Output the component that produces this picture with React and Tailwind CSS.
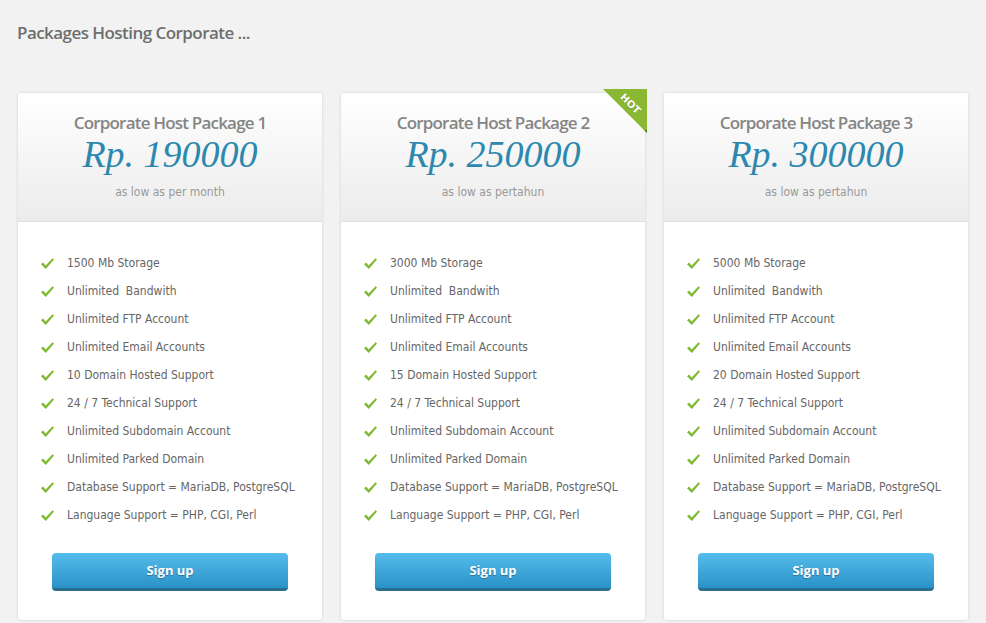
import React from "react";

const packages = [
  {
    name: "Corporate Host Package 1",
    price: "Rp. 190000",
    period: "as low as per month",
    storage: "1500",
    domains: "10",
  },
  {
    name: "Corporate Host Package 2",
    price: "Rp. 250000",
    period: "as low as pertahun",
    storage: "3000",
    domains: "15",
    hot: true,
  },
  {
    name: "Corporate Host Package 3",
    price: "Rp. 300000",
    period: "as low as pertahun",
    storage: "5000",
    domains: "20",
  },
];

function Check() {
  return (
    <svg width="15" height="13" viewBox="0 0 15 13" className="shrink-0">
      <path d="M1 7.2 L3.2 5.6 L5.6 8.6 L12.6 1.2 L14 2.4 L5.8 12 Z" fill="#7fb832" />
    </svg>
  );
}

function HotRibbon() {
  return (
    <div className="absolute -top-[4px] -right-[2px] w-[44px] h-[44px] pointer-events-none">
      <svg width="44" height="44" viewBox="0 0 44 44" className="absolute inset-0">
        <polygon points="0,0 44,0 44,44" fill="#8bb833" />
        <polygon points="41,41 44,41 44,44" fill="#5c7d1f" />
      </svg>
      <span
        className="absolute top-[9px] right-[0px] w-[34px] text-center text-[10px] leading-[12px] font-bold text-white rotate-45 [text-shadow:0_1px_0_rgba(0,0,0,0.25)]"
        style={{ fontFamily: '"DejaVu Sans", sans-serif' }}
      >
        HOT
      </span>
    </div>
  );
}

function Card({ pkg }) {
  const features = [
    `${pkg.storage} Mb Storage`,
    "Unlimited\u00a0 Bandwith",
    "Unlimited FTP Account",
    "Unlimited Email Accounts",
    `${pkg.domains} Domain Hosted Support`,
    "24 / 7 Technical Support",
    "Unlimited Subdomain Account",
    "Unlimited Parked Domain",
    "Database Support = MariaDB, PostgreSQL",
    "Language Support = PHP, CGI, Perl",
  ];

  return (
    <div className="relative bg-white rounded-[3px] shadow-[0_0_3px_rgba(0,0,0,0.15)]">
      {pkg.hot && <HotRibbon />}
      <div className="h-[129px] flex flex-col items-center rounded-t-[3px] border-b border-[#dedede] bg-gradient-to-b from-white to-[#ececec]">
        <div
          className="mt-[19px] text-[17px] leading-[22px] font-semibold text-[#858585] tracking-[-0.8px]"
          style={{ fontFamily: '"Open Sans", sans-serif' }}
        >
          {pkg.name}
        </div>
        <div
          className="text-[38px] leading-[40px] italic text-[#2c88ae]"
          style={{ fontFamily: '"Liberation Serif", serif' }}
        >
          {pkg.price}
        </div>
        <div
          className="mt-[10px] text-[12px] leading-[16px] text-[#999999]"
          style={{ fontFamily: '"DejaVu Sans Condensed", "DejaVu Sans", sans-serif' }}
        >
          {pkg.period}
        </div>
      </div>
      <ul
        className="pt-[27px] pl-[22px] text-[12px] text-[#666666]"
        style={{ fontFamily: '"DejaVu Sans Condensed", "DejaVu Sans", sans-serif' }}
      >
        {features.map((f) => (
          <li key={f} className="h-[28px] flex items-center gap-[12px]">
            <Check />
            <span>{f}</span>
          </li>
        ))}
      </ul>
      <div className="flex justify-center pt-[24px] pb-[29px]">
        <button
          className="w-[236px] h-[38px] rounded-[4px] bg-gradient-to-b from-[#55bcec] to-[#2a92c8] border-b-[3px] border-[#2b6f90] text-white text-[13px] font-bold [text-shadow:0_1px_1px_rgba(0,0,0,0.3)]"
          style={{ fontFamily: '"Open Sans", sans-serif' }}
        >
          Sign up
        </button>
      </div>
    </div>
  );
}

export default function App() {
  return (
    <div className="min-h-screen bg-[#f2f2f2] pt-[22px]">
      <h1
        className="px-[17px] text-[17px] leading-[22px] font-semibold text-[#6e6e6e] tracking-[-0.55px]"
        style={{ fontFamily: '"Open Sans", sans-serif' }}
      >
        Packages Hosting Corporate ...
      </h1>
      <div className="mt-[49px] px-[18px] grid grid-cols-3 gap-[19px]">
        {packages.map((p) => (
          <Card key={p.name} pkg={p} />
        ))}
      </div>
    </div>
  );
}
